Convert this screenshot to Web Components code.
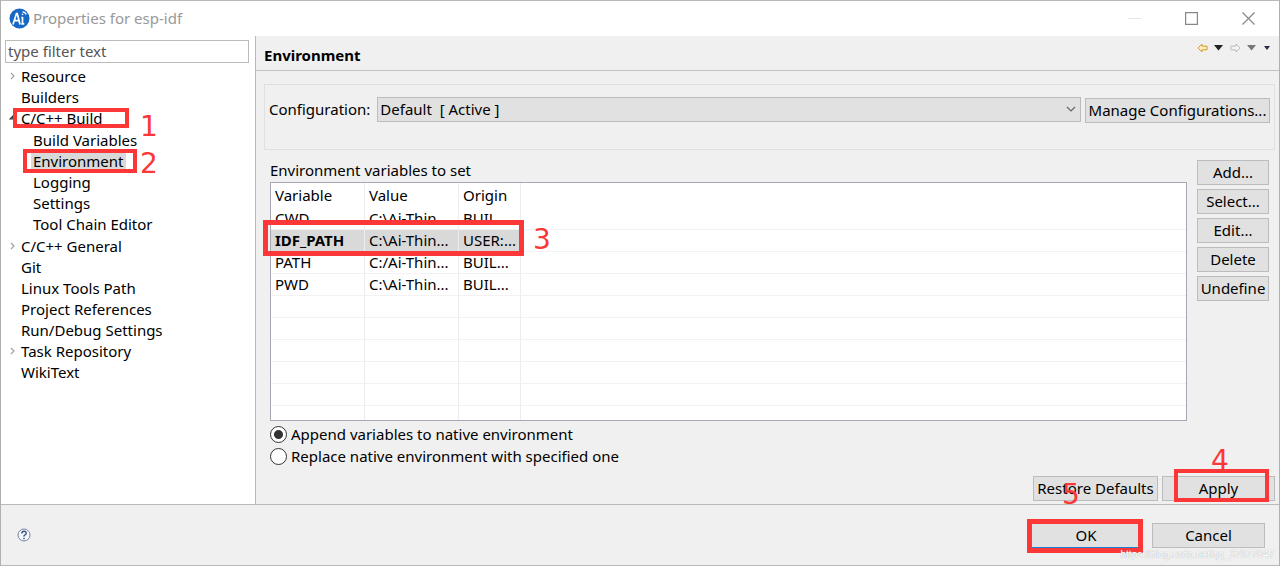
<!DOCTYPE html>
<html lang="en">
<head>
<meta charset="utf-8">
<title>Properties for esp-idf</title>
<style>
html, body { margin: 0; }
body { font: 15px/20px "Noto Sans", "Open Sans", sans-serif; color: #000; background: #f0f0f0; }
</style>
</head>
<body>
<properties-dialog></properties-dialog>
<script>
const define = (name, html, setup) => {
  const template = document.createElement('template');
  template.innerHTML = html;
  customElements.define(name, class extends HTMLElement {
    constructor() {
      super();
      this.attachShadow({ mode: 'open' }).append(template.content.cloneNode(true));
    }
    connectedCallback() { if (setup) setup(this, this.shadowRoot); }
  });
};

// Red frame laid over a control; the host's user places it.
define('mark-box', `<style>
:host { position: absolute; box-sizing: border-box; border: 4px solid #fb3737; pointer-events: none; z-index: 2; }
</style>`);

define('mark-step', `<style>
:host { position: absolute; font: 28px/28px "DejaVu Sans", sans-serif; color: #fb3737; pointer-events: none; z-index: 3; }
</style><slot></slot>`);

define('push-button', `<style>
:host { display: block; }
button { display: block; box-sizing: border-box; width: 100%; height: 25px; padding: 0; margin: 0; border: 1px solid #bcbcbc;
  background: #e1e1e1; font: inherit; line-height: 23px; color: inherit; text-align: center; white-space: nowrap; }
:host([primary]) button { border-color: #1883d7; }
</style><button type="button"><slot></slot></button>`);

define('title-bar', `<style>
:host { display: flex; align-items: center; height: 35px; padding: 0 24px 0 8px; background: #fff; border-top: 1px solid #b9b9bb; color: #999; }
h1 { flex: 1; margin: 0 0 2px 3px; font: inherit; }
.controls { display: flex; gap: 44px; }
button { display: flex; padding: 0; border: 0; background: none; }
svg { display: block; }
</style>
<svg width="21" height="21" viewBox="0 0 21 21"><circle cx="10.500" cy="10.500" r="10" fill="#1768c4"/>
<g fill="none" stroke="#fff" stroke-width="1.700"><path d="M4 16.500 7.500 5.500h.8l2.700 11M5.200 12.600h5"/><path d="M13.500 9v7M12.300 15.800h3M12.300 9.500h1.500"/><path d="M12.800 6.300h1.500M13.500 3.800q3 .2 3.700 2.700" stroke-width="1.200"/></g></svg>
<h1>Properties for esp-idf</h1>
<div class="controls">
<button type="button" aria-label="Minimize"><svg width="13" height="13"><path d="M0 6.500h13" stroke="#e6e6e6"/></svg></button>
<button type="button" aria-label="Maximize"><svg width="13" height="13"><path d="M.6.600h11.800v11.800H.6z" fill="none" stroke="#888" stroke-width="1.200"/></svg></button>
<button type="button" aria-label="Close"><svg width="13" height="13"><path d="M.5.500l12 12M12.500.500l-12 12" stroke="#888" stroke-width="1.200"/></svg></button>
</div>`);

define('tree-item', `<style>
:host { display: block; }
.row { position: relative; display: flex; align-items: center; height: 21px; }
svg { width: 8px; height: 10px; margin-right: 2px; visibility: hidden; fill: none; stroke: #a0a0a0; stroke-width: 1.200; }
:host([closed]) svg { visibility: visible; }
:host([open]) svg { visibility: visible; stroke: #333; }
:host([open]) svg path { d: path("M1 6h3V3z"); }
span { padding: 0 2px; white-space: nowrap; }
:host([selected]) span { background: #d9d9d9; }
.children { padding-left: 12px; }
:host([open]) .children { padding-top: 1px; padding-bottom: 1px; }
</style>
<div class="row"><svg viewBox="0 0 8 10"><path d="M2 2l3 3-3 3"/></svg><span></span><slot name="mark"></slot></div>
<div class="children"><slot></slot></div>`, (host, root) => {
  root.querySelector('span').textContent = host.getAttribute('label');
});

define('category-tree', `<style>
:host { display: block; box-sizing: border-box; padding: 4px 6px 0 4px; background: #fff; }
input { display: block; box-sizing: border-box; width: 100%; height: 23px; margin: 0 0 2px; padding: 0 2px 1px; border: 1px solid #bbb;
  border-radius: 0; font: inherit; outline: 0; background: #fff; }
input::placeholder { color: #555; opacity: 1; }
nav { padding-left: 4px; }
.one { left: 4px; top: 1px; width: 116px; height: 20px; }
.n1 { left: 131px; top: 6px; }
.two { left: 2px; top: -1px; width: 114px; height: 24px; }
.n2 { left: 119px; top: 0; }
</style>
<input type="text" placeholder="type filter text" aria-label="Filter">
<nav aria-label="Property pages">
<tree-item label="Resource" closed></tree-item>
<tree-item label="Builders"></tree-item>
<tree-item label="C/C++ Build" open>
  <mark-box slot="mark" class="one"></mark-box><mark-step slot="mark" class="n1">1</mark-step>
  <tree-item label="Build Variables"></tree-item>
  <tree-item label="Environment" selected><mark-box slot="mark" class="two"></mark-box><mark-step slot="mark" class="n2">2</mark-step></tree-item>
  <tree-item label="Logging"></tree-item>
  <tree-item label="Settings"></tree-item>
  <tree-item label="Tool Chain Editor"></tree-item>
</tree-item>
<tree-item label="C/C++ General" closed></tree-item>
<tree-item label="Git"></tree-item>
<tree-item label="Linux Tools Path"></tree-item>
<tree-item label="Project References"></tree-item>
<tree-item label="Run/Debug Settings"></tree-item>
<tree-item label="Task Repository" closed></tree-item>
<tree-item label="WikiText"></tree-item>
</nav>`);

define('page-header', `<style>
:host { display: flex; justify-content: space-between; height: 34px; padding: 0 8px 0 8px; border-bottom: 1px solid #c3c3c3; }
h2 { margin: 0; font: inherit; font-weight: bold; line-height: 38px; }
.nav { display: flex; align-items: center; height: 23px; gap: 6px; }
button { padding: 0; border: 0; background: none; }
svg { display: block; }
</style>
<h2>Environment</h2>
<div class="nav">
<button type="button" aria-label="Back"><svg width="11" height="10"><path d="M1 5l4-4v2.200h5v3.600H5V9z" fill="#fff3b8" stroke="#d29a35"/></svg></button>
<button type="button" aria-label="Back history"><svg width="10" height="6"><path d="M0 0h9L4.500 5.500z" fill="#222"/></svg></button>
<button type="button" aria-label="Forward"><svg width="11" height="10"><path d="M10 5L6 1v2.200H1v3.600h5V9z" fill="#f5f5f5" stroke="#bbb"/></svg></button>
<button type="button" aria-label="Forward history"><svg width="10" height="6"><path d="M0 0h9L4.500 5.500z" fill="#777"/></svg></button>
<button type="button" aria-label="Menu"><svg width="8" height="4"><path d="M1 0h6L4 4z" fill="#352547"/></svg></button>
</div>`);

define('configuration-picker', `<style>
:host { display: flex; align-items: flex-start; box-sizing: border-box; height: 66px; padding: 12px 4px 0 4px; border: 1px solid #e0e0e0; }
label { line-height: 25px; margin-right: 7px; }
.combo { position: relative; flex: 1; margin-right: 4px; }
select { display: block; appearance: none; box-sizing: border-box; width: 100%; height: 25px; padding: 0 2px 1px; border: 1px solid #bcbcbc;
  border-radius: 0; background: #e1e1e1; font: inherit; color: inherit; }
svg { position: absolute; right: 5px; top: 9px; pointer-events: none; }
push-button { width: 185px; margin-top: 1px; }
</style>
<label for="config">Configuration:</label>
<div class="combo"><select id="config"><option>Default&nbsp; [ Active ]</option></select>
<svg width="10" height="7"><path d="M1 1l4 4 4-4" fill="none" stroke="#666" stroke-width="1.200"/></svg></div>
<push-button>Manage Configurations...</push-button>`);

define('variable-table', `<style>
:host { display: block; position: relative; box-sizing: border-box; border: 1px solid #a5a8b0; background: #fff; }
table { width: 100%; table-layout: fixed; border-collapse: separate; border-spacing: 0; }
.name, .value { width: 94px; } .origin { width: 62px; }
th, td { box-sizing: border-box; height: 22px; padding: 0 0 1px 4px; border-right: 1px solid #ededf0; border-bottom: 1px solid #f2f2f4;
  font-weight: normal; text-align: left; line-height: 20px; white-space: nowrap; overflow: hidden; }
th { height: 25px; border-bottom: 0; }
th:last-child, td:last-child { border-right: 0; }
thead td { border-bottom: 0; }
tr.selected td:not(:last-child) { background: #d9d9d9; }
tr.selected td:first-child { font-weight: bold; }
tr.tail td { height: 14px; border-bottom: 0; }
mark-box { left: -8px; top: 37px; width: 261px; height: 36px; border-width: 5px; }
mark-step { left: 262px; top: 43px; }
</style>
<table aria-label="Environment variables to set">
<colgroup><col class="name"><col class="value"><col class="origin"><col></colgroup>
<thead><tr><th scope="col">Variable</th><th scope="col">Value</th><th scope="col">Origin</th><td></td></tr></thead>
<tbody>
<tr><td>CWD</td><td>C:\\Ai-Thin...</td><td>BUIL...</td><td></td></tr>
<tr class="selected"><td>IDF_PATH</td><td>C:\\Ai-Thin...</td><td>USER:...</td><td></td></tr>
<tr><td>PATH</td><td>C:/Ai-Thin...</td><td>BUIL...</td><td></td></tr>
<tr><td>PWD</td><td>C:\\Ai-Thin...</td><td>BUIL...</td><td></td></tr>
<tr><td></td><td></td><td></td><td></td></tr><tr><td></td><td></td><td></td><td></td></tr>
<tr><td></td><td></td><td></td><td></td></tr><tr><td></td><td></td><td></td><td></td></tr>
<tr><td></td><td></td><td></td><td></td></tr>
<tr class="tail"><td></td><td></td><td></td><td></td></tr>
</tbody></table>
<mark-box></mark-box><mark-step>3</mark-step>`);

define('environment-mode', `<style>
:host { display: block; padding-top: 2px; }
label { display: flex; align-items: center; width: max-content; height: 22px; gap: 4px; }
input { appearance: none; box-sizing: border-box; width: 17px; height: 17px; margin: 0; border: 1px solid #333; border-radius: 50%; background: #fff; }
input:checked { background: radial-gradient(circle, #333 0 4px, #fff 5px); }
</style>
<label><input type="radio" name="mode" checked>Append variables to native environment</label>
<label><input type="radio" name="mode">Replace native environment with specified one</label>`);

define('environment-page', `<style>
:host { display: flex; flex-direction: column; box-sizing: border-box; min-width: 0; border-left: 1px solid #b8b8b8; }
.body { flex: 1; padding: 13px 4px 0 8px; }
.editor { display: grid; grid-template-columns: 1fr 72px; column-gap: 10px; padding: 10px 6px 0 6px; }
.caption { margin: 0; height: 22px; line-height: 20px; }
.side { display: flex; flex-direction: column; gap: 4px; }
.actions { display: flex; justify-content: flex-end; gap: 4px; padding: 0 4px 3px; }
.restore { position: relative; width: 125px; }
.apply { position: relative; width: 113px; }
mark-box { left: 12px; top: -7px; width: 95px; height: 33px; }
.n4 { left: 49px; top: -29px; }
.n5 { left: 29px; top: 5px; }
</style>
<page-header></page-header>
<div class="body">
<configuration-picker></configuration-picker>
<div class="editor">
<div><p class="caption">Environment variables to set</p><variable-table></variable-table><environment-mode></environment-mode></div>
<div class="side"><push-button>Add...</push-button><push-button>Select...</push-button><push-button>Edit...</push-button><push-button>Delete</push-button><push-button>Undefine</push-button></div>
</div>
</div>
<div class="actions">
<div class="restore"><push-button>Restore Defaults</push-button><mark-step class="n5">5</mark-step></div>
<div class="apply"><push-button>Apply</push-button><mark-box></mark-box><mark-step class="n4">4</mark-step></div>
</div>`);

define('dialog-footer', `<style>
:host { position: relative; display: flex; align-items: center; height: 60px; padding: 0 14px 0 16px; border-top: 1px solid #b8b8b8; border-bottom: 1px solid #b8b8b8; }
.help { margin-right: auto; padding: 0; border: 0; background: none; }
.help svg { display: block; }
.ok { position: relative; width: 112px; margin-right: 10px; }
.cancel { width: 113px; }
mark-box { left: -3px; top: -4px; width: 116px; height: 34px; border-width: 5px; }
.source { position: absolute; right: 5px; bottom: 4px; font: 10px/12px "Liberation Sans", sans-serif; color: #fff; text-shadow: 0 0 1px #999; z-index: 4; }
</style>
<button class="help" type="button" aria-label="Help"><svg width="14" height="14"><circle cx="7" cy="7" r="6" fill="#f5f7fa" stroke="#7484a0"/><path d="M4.800 5.500q0-2.200 2.200-2.200t2.200 1.900q0 1.200-1.200 1.700T7 8.700M7 9.700v1.500" fill="none" stroke="#3b5588" stroke-width="1.400"/></svg></button>
<div class="ok"><push-button primary>OK</push-button><mark-box></mark-box></div>
<push-button class="cancel">Cancel</push-button>
<span class="source">https://blog.csdn.net/qq_37977847</span>`);

define('properties-dialog', `<style>
:host { display: flex; flex-direction: column; box-sizing: border-box; min-height: 100vh; border-left: 1px solid #b0b0b0; border-right: 1px solid #b0b0b0; }
main { flex: 1; display: grid; grid-template-columns: 254px 1fr; }
</style>
<title-bar></title-bar>
<main><category-tree></category-tree><environment-page></environment-page></main>
<dialog-footer></dialog-footer>`);
</script>
</body>
</html>
